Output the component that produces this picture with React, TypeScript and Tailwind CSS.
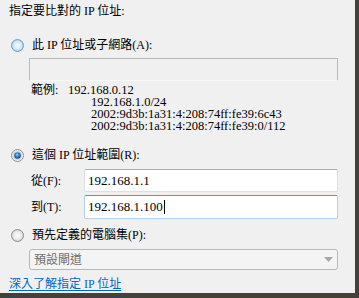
import React from "react";

const FONT = { fontFamily: '"Liberation Serif", "Noto Sans CJK TC", serif' };

function Radio({ kind }: { kind: "blue" | "off" | "on" }) {
  const id = `rg-${kind}`;
  return (
    <svg width="13" height="13" viewBox="0 0 13 13" className="shrink-0">
      <defs>
        <radialGradient id={id} cx="50%" cy="50%" r="55%">
          {kind === "blue" ? (
            <>
              <stop offset="0%" stopColor="#f4fafe" />
              <stop offset="55%" stopColor="#d8ecfa" />
              <stop offset="100%" stopColor="#8cc2ea" />
            </>
          ) : (
            <>
              <stop offset="0%" stopColor="#fbfbfb" />
              <stop offset="55%" stopColor="#ececec" />
              <stop offset="100%" stopColor="#c4c6c9" />
            </>
          )}
        </radialGradient>
        <radialGradient id="dot" cx="45%" cy="40%" r="60%">
          <stop offset="0%" stopColor="#8ce0ff" />
          <stop offset="45%" stopColor="#2f8ad4" />
          <stop offset="100%" stopColor="#103c78" />
        </radialGradient>
      </defs>
      <circle
        cx="6.5"
        cy="6.5"
        r="6"
        fill={kind === "on" ? "#f2f2f2" : `url(#${id})`}
        stroke={kind === "blue" ? "#7d9fbd" : "#8f9091"}
        strokeWidth="1"
      />
      {kind === "on" && (
        <>
          <circle cx="6.5" cy="6.5" r="4.6" fill="url(#rg-on)" />
          <circle cx="6.5" cy="6.5" r="3.3" fill="url(#dot)" />
        </>
      )}
    </svg>
  );
}

export default function App() {
  return (
    <div className="w-[359px] h-[298px] bg-[#45403a] overflow-hidden">
      <div
        className="w-[355px] h-[293px] bg-[#f0f0f0] text-black text-[12px] leading-[12px] pl-[9px] flex flex-col"
        style={FONT}
      >
        <div className="pt-[5px] h-[17px]">指定要比對的 IP 位址:</div>

        <div className="mt-[21px] h-[14px] flex items-center gap-[8px] pl-[2px]">
          <Radio kind="blue" />
          <span>此 IP 位址或子網路(A):</span>
        </div>

        <div className="mt-[6px] ml-[20px] w-[309px] h-[23px] border border-[#b9b9b9] border-b-[#f8f8f8] bg-[#f0f0f0] rounded-[1px]" />

        <div className="mt-[3px] flex flex-col">
          <div className="flex h-[12px] pl-[22px] leading-[12px]">
            <span className="w-[37px]">範例:</span>
            <span className="text-[12.5px] leading-[12px]">192.168.0.12</span>
          </div>
          <div className="h-[12px] pl-[82px] text-[12.5px] leading-[12px]">192.168.1.0/24</div>
          <div className="h-[12px] pl-[82px] text-[12.5px] leading-[12px]">2002:9d3b:1a31:4:208:74ff:fe39:6c43</div>
          <div className="h-[12px] pl-[82px] text-[12.5px] leading-[12px]">2002:9d3b:1a31:4:208:74ff:fe39:0/112</div>
        </div>

        <div className="mt-[16px] h-[14px] flex items-center gap-[8px] pl-[2px]">
          <Radio kind="on" />
          <span>這個 IP 位址範圍(R):</span>
        </div>

        <div className="mt-[7px] flex items-center">
          <span className="w-[53px] pl-[22px] shrink-0">從(F):</span>
          <div className="ml-[22px] w-[254px] h-[23px] bg-white border border-[#dbdfe6] border-t-[#abadb3] rounded-[2px] flex items-center pl-[3px] text-[13px]">
            192.168.1.1
          </div>
        </div>

        <div className="mt-[3px] flex items-center">
          <span className="w-[53px] pl-[22px] shrink-0">到(T):</span>
          <div className="ml-[22px] w-[254px] h-[24px] bg-white border border-[#b5d0e8] border-t-[#5b95c3] rounded-[2px] flex items-center pl-[3px] text-[13px]">
            <span>192.168.1.100</span>
            <span className="inline-block w-[1px] h-[14px] bg-black ml-[1px]" />
          </div>
        </div>

        <div className="mt-[9px] h-[14px] flex items-center gap-[8px] pl-[2px]">
          <Radio kind="off" />
          <span>預先定義的電腦集(P):</span>
        </div>

        <div className="mt-[7px] ml-[20px] w-[309px] h-[21px] bg-[#f4f4f4] border border-[#b6b9bc] rounded-[3px] flex items-center justify-between pl-[4px] pr-[4px] text-[#6d6d6d]">
          <span>預設閘道</span>
          <svg width="9" height="5" viewBox="0 0 9 5">
            <path d="M0 0 H9 L4.5 5 Z" fill="#a8a8a8" />
          </svg>
        </div>

        <div className="mt-[7px] h-[14px] flex items-center">
          <span className="text-[#0066cc] underline underline-offset-[2px]">深入了解指定 IP 位址</span>
        </div>
      </div>
    </div>
  );
}
